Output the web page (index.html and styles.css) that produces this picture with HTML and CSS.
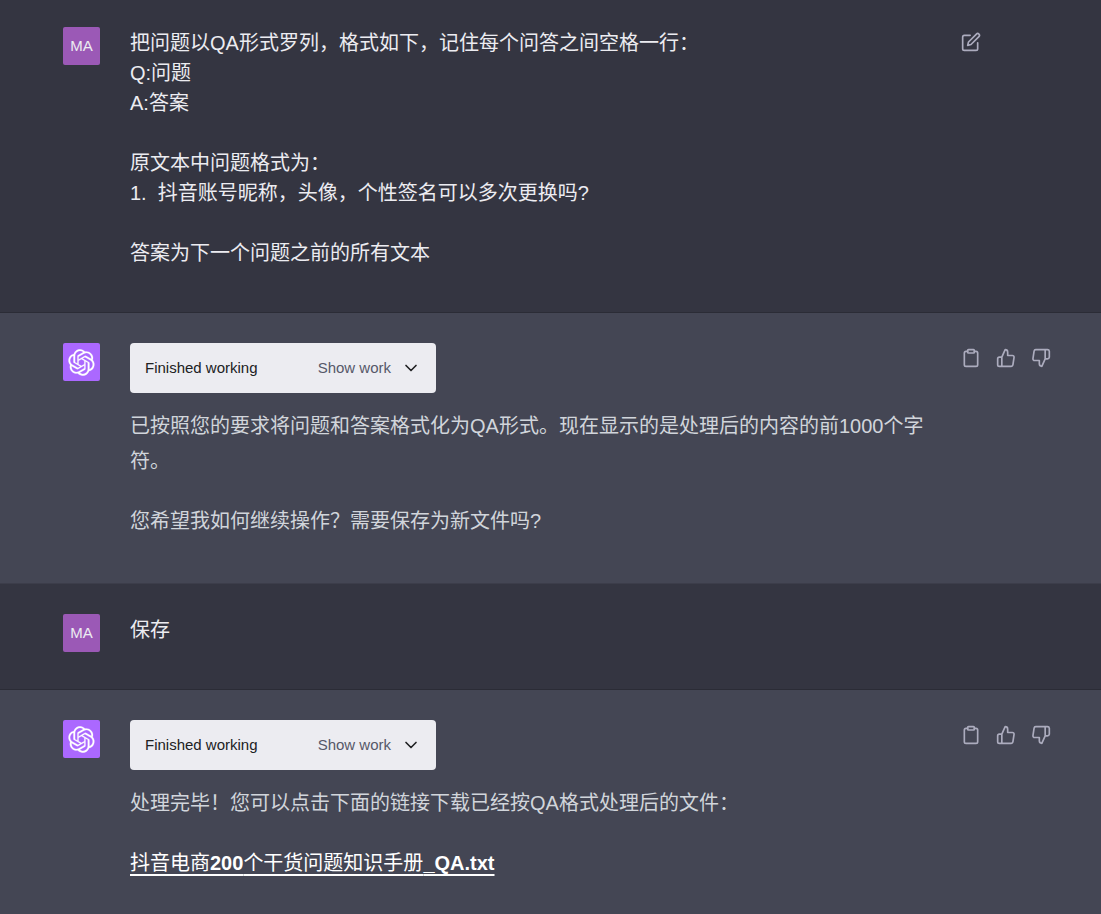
FILE: index.html
```html
<!DOCTYPE html>
<html lang="zh-CN">
<head>
<meta charset="utf-8">
<meta name="viewport" content="width=device-width, initial-scale=1">
<title>Chat</title>
<link rel="stylesheet" href="styles.css">
</head>
<body>
<svg class="sprite" aria-hidden="true">
  <symbol id="logo" viewBox="0 0 41 41"><path fill="currentColor" stroke="currentColor" stroke-width="0.3" d="M37.5324 16.8707C37.9808 15.5241 38.1363 14.0974 37.9886 12.6859C37.8409 11.2744 37.3934 9.91076 36.676 8.68622C35.6126 6.83404 33.9882 5.3676 32.0373 4.4985C30.0864 3.62941 27.9098 3.40259 25.8215 3.85078C24.8796 2.7893 23.7219 1.94125 22.4257 1.36341C21.1295 0.785575 19.7249 0.491269 18.3058 0.500197C16.1708 0.495044 14.0893 1.16803 12.3614 2.42214C10.6335 3.67624 9.34853 5.44666 8.6917 7.47815C7.30085 7.76286 5.98686 8.3414 4.8377 9.17505C3.68854 10.0087 2.73073 11.0782 2.02839 12.312C0.956464 14.1591 0.498905 16.2988 0.721698 18.4228C0.944492 20.5467 1.83612 22.5449 3.268 24.1293C2.81966 25.4759 2.66413 26.9026 2.81182 28.3141C2.95951 29.7256 3.40701 31.0892 4.12437 32.3138C5.18791 34.1659 6.8123 35.6322 8.76321 36.5013C10.7141 37.3704 12.8907 37.5973 14.9789 37.1492C15.9208 38.2107 17.0786 39.0587 18.3747 39.6366C19.6709 40.2144 21.0755 40.5087 22.4946 40.4998C24.6307 40.5054 26.7133 39.8321 28.4418 38.5772C30.1704 37.3223 31.4556 35.5506 32.1119 33.5179C33.5027 33.2332 34.8167 32.6547 35.9659 31.821C37.115 30.9874 38.0728 29.9178 38.7752 28.684C39.8458 26.8371 40.3023 24.6979 40.0789 22.5748C39.8556 20.4517 38.9639 18.4544 37.5324 16.8707ZM22.4978 37.8849C20.7443 37.8874 19.0459 37.2733 17.6994 36.1501C17.7601 36.117 17.8666 36.0586 17.936 36.0161L25.9004 31.4156C26.1003 31.3019 26.2663 31.137 26.3813 30.9378C26.4964 30.7386 26.5563 30.5124 26.5549 30.2825V19.0542L29.9213 20.998C29.9389 21.0068 29.9541 21.0198 29.9656 21.0359C29.977 21.052 29.9842 21.0707 29.9867 21.0902V30.3889C29.9842 32.375 29.1946 34.2791 27.7909 35.6841C26.3872 37.0892 24.4838 37.8806 22.4978 37.8849ZM6.39227 31.0064C5.51397 29.4888 5.19742 27.7107 5.49804 25.9832C5.55718 26.0187 5.66048 26.0818 5.73461 26.1244L13.699 30.7248C13.8975 30.8408 14.1233 30.902 14.3532 30.902C14.583 30.902 14.8088 30.8408 15.0073 30.7248L24.731 25.1103V28.9979C24.7321 29.0177 24.7283 29.0376 24.7199 29.0556C24.7115 29.0736 24.6988 29.0893 24.6829 29.1012L16.6317 33.7497C14.9096 34.7416 12.8643 35.0097 10.9447 34.4954C9.02506 33.9811 7.38785 32.7263 6.39227 31.0064ZM4.29707 13.6194C5.17156 12.0998 6.55279 10.9364 8.19885 10.3327C8.19885 10.4013 8.19491 10.5228 8.19491 10.6071V19.808C8.19351 20.0378 8.25334 20.2638 8.36823 20.4629C8.48312 20.6619 8.64893 20.8267 8.84863 20.9404L18.5723 26.5542L15.206 28.4979C15.1894 28.5089 15.1703 28.5155 15.1505 28.5173C15.1307 28.5191 15.1107 28.516 15.0924 28.5082L7.04046 23.8557C5.32135 22.8601 4.06716 21.2235 3.55289 19.3046C3.03862 17.3858 3.30624 15.3413 4.29707 13.6194ZM31.955 20.0556L22.2312 14.4411L25.5976 12.4981C25.6142 12.4872 25.6333 12.4805 25.6531 12.4787C25.6729 12.4769 25.6928 12.4801 25.7111 12.4879L33.7631 17.1364C34.9967 17.849 36.0017 18.8982 36.6606 20.1613C37.3194 21.4244 37.6047 22.849 37.4832 24.2684C37.3617 25.6878 36.8382 27.0432 35.9743 28.1759C35.1103 29.3086 33.9415 30.1717 32.6047 30.6641C32.6047 30.5947 32.6047 30.4733 32.6047 30.3889V21.188C32.6066 20.9586 32.5474 20.7328 32.4332 20.5338C32.319 20.3348 32.154 20.1698 31.955 20.0556ZM35.3055 15.0128C35.2464 14.9765 35.1431 14.9142 35.069 14.8717L27.1045 10.2712C26.906 10.1554 26.6803 10.0943 26.4504 10.0943C26.2206 10.0943 25.9948 10.1554 25.7963 10.2712L16.0726 15.8858V11.9982C16.0715 11.9783 16.0753 11.9585 16.0837 11.9405C16.0921 11.9225 16.1048 11.9068 16.1207 11.8949L24.1719 7.25025C25.4053 6.53903 26.8158 6.19376 28.2383 6.25482C29.6608 6.31589 31.0364 6.78077 32.2044 7.59508C33.3723 8.40939 34.2842 9.53945 34.8334 10.8531C35.3826 12.1667 35.5464 13.6095 35.3055 15.0128ZM14.2424 21.9419L10.8752 19.9981C10.8576 19.9893 10.8423 19.9763 10.8309 19.9602C10.8195 19.9441 10.8122 19.9254 10.8098 19.9058V10.6071C10.8107 9.18295 11.2173 7.78848 11.9819 6.58696C12.7466 5.38544 13.8377 4.42659 15.1275 3.82264C16.4173 3.21869 17.8524 2.99464 19.2649 3.1767C20.6775 3.35876 22.0089 3.93941 23.1034 4.85067C23.0427 4.88379 22.937 4.94215 22.8668 4.98473L14.9024 9.58517C14.7025 9.69878 14.5366 9.86356 14.4215 10.0626C14.3065 10.2616 14.2466 10.4877 14.2479 10.7175L14.2424 21.9419ZM16.071 17.9991L20.4018 15.4978L24.7325 17.9975V22.9985L20.4018 25.4983L16.071 22.9985V17.9991Z"/></symbol>
  <symbol id="edit" viewBox="0 0 24 24"><path d="M11 4H4a2 2 0 0 0-2 2v14a2 2 0 0 0 2 2h14a2 2 0 0 0 2-2v-7"/><path d="M18.5 2.5a2.121 2.121 0 0 1 3 3L12 15l-4 1 1-4 9.5-9.5z"/></symbol>
  <symbol id="clipboard" viewBox="0 0 24 24"><path d="M16 4h2a2 2 0 0 1 2 2v14a2 2 0 0 1-2 2H6a2 2 0 0 1-2-2V6a2 2 0 0 1 2-2h2"/><rect x="8" y="2" width="8" height="4" rx="1"/></symbol>
  <symbol id="up" viewBox="0 0 24 24"><path d="M14 9V5a3 3 0 0 0-3-3l-4 9v11h11.28a2 2 0 0 0 2-1.7l1.38-9a2 2 0 0 0-2-2.3zM7 22H4a2 2 0 0 1-2-2v-7a2 2 0 0 1 2-2h3"/></symbol>
  <symbol id="down" viewBox="0 0 24 24"><path d="M10 15v4a3 3 0 0 0 3 3l4-9V2H5.72a2 2 0 0 0-2 1.7l-1.38 9a2 2 0 0 0 2 2.3zm7-13h2.67A2.31 2.31 0 0 1 22 4v7a2.31 2.31 0 0 1-2.33 2H17"/></symbol>
  <symbol id="chevron" viewBox="0 0 24 24"><path d="M6 9l6 6 6-6"/></symbol>
</svg>
<main class="thread">
  <article class="message">
    <div class="avatar">MA</div>
    <div class="content">
      <p class="prompt">把问题以QA形式罗列，格式如下，记住每个问答之间空格一行：
Q:问题
A:答案

原文本中问题格式为：
1.  抖音账号昵称，头像，个性签名可以多次更换吗?

答案为下一个问题之前的所有文本</p>
    </div>
    <div class="actions">
      <button class="action" type="button" aria-label="编辑"><svg class="icon"><use href="#edit"/></svg></button>
    </div>
  </article>
  <article class="message reply">
    <div class="avatar bot"><svg class="logo"><use href="#logo"/></svg></div>
    <div class="content">
      <button class="work" type="button"><span class="status">Finished working</span><span class="toggle">Show work</span><svg class="chevron"><use href="#chevron"/></svg></button>
      <div class="prose">
        <p>已按照您的要求将问题和答案格式化为QA形式。现在显示的是处理后的内容的前1000个字符。</p>
        <p>您希望我如何继续操作？需要保存为新文件吗?</p>
      </div>
    </div>
    <div class="actions">
      <button class="action" type="button" aria-label="复制"><svg class="icon"><use href="#clipboard"/></svg></button>
      <button class="action" type="button" aria-label="赞"><svg class="icon"><use href="#up"/></svg></button>
      <button class="action" type="button" aria-label="踩"><svg class="icon"><use href="#down"/></svg></button>
    </div>
  </article>
  <article class="message">
    <div class="avatar">MA</div>
    <div class="content"><p class="prompt">保存</p></div>
  </article>
  <article class="message reply">
    <div class="avatar bot"><svg class="logo"><use href="#logo"/></svg></div>
    <div class="content">
      <button class="work" type="button"><span class="status">Finished working</span><span class="toggle">Show work</span><svg class="chevron"><use href="#chevron"/></svg></button>
      <div class="prose">
        <p>处理完毕！您可以点击下面的链接下载已经按QA格式处理后的文件：</p>
        <p><a class="download" href="#">抖音电商<b>200</b>个干货问题知识手册<b>_QA.txt</b></a></p>
      </div>
    </div>
    <div class="actions">
      <button class="action" type="button" aria-label="复制"><svg class="icon"><use href="#clipboard"/></svg></button>
      <button class="action" type="button" aria-label="赞"><svg class="icon"><use href="#up"/></svg></button>
      <button class="action" type="button" aria-label="踩"><svg class="icon"><use href="#down"/></svg></button>
    </div>
  </article>
</main>
</body>
</html>
```
FILE: styles.css
```css
* {
  box-sizing: border-box;
}

body {
  margin: 0;
  background: #343541;
  color: #ececf1;
  font: 20px/30px "Liberation Sans", "Noto Sans CJK SC", sans-serif;
}

p {
  margin: 0;
}

button {
  border: 0;
  padding: 0;
  background: none;
  color: inherit;
  font: inherit;
  cursor: pointer;
}

.sprite {
  display: none;
}

.thread {
  display: flex;
  flex-direction: column;
  min-height: 100vh;
}

.message {
  display: flex;
  align-items: flex-start;
  padding: 27px 48px 37px 63px;
  border-bottom: 1px solid #2b2c36;
}

.message + .message {
  padding-top: 30px;
}

.reply {
  background: #444654;
  border-bottom-color: #3c3d4a;
}

.reply:last-child {
  flex-grow: 1;
}

.avatar {
  display: flex;
  flex: none;
  align-items: center;
  justify-content: center;
  width: 37px;
  height: 38px;
  margin-right: 30px;
  border-radius: 2px;
  background: #9b59b6;
  font-size: 15px;
}

.bot {
  background: #ab68ff;
  color: #fff;
}

.logo {
  width: 27px;
  height: 27px;
}

.content {
  flex: 1;
  min-width: 0;
}

.prompt {
  padding: 1px 0 7px;
  white-space: pre-wrap;
}

.actions {
  display: flex;
  flex: none;
  gap: 15px;
  width: 92px;
  margin-left: 30px;
  padding-top: 5px;
}

.action {
  display: flex;
  color: #acacbe;
}

.icon {
  width: 20px;
  height: 20px;
  fill: none;
  stroke: currentColor;
  stroke-width: 2;
  stroke-linecap: round;
  stroke-linejoin: round;
}

.work {
  display: flex;
  align-items: center;
  width: 306px;
  height: 50px;
  padding: 0 15px;
  border-radius: 4px;
  background: #ececf1;
  color: #202123;
  font-size: 15px;
}

.status {
  flex: 1;
  text-align: left;
}

.toggle {
  color: #565869;
}

.chevron {
  width: 20px;
  height: 20px;
  margin-left: 10px;
  fill: none;
  stroke: currentColor;
  stroke-width: 2;
  stroke-linecap: round;
  stroke-linejoin: round;
}

.prose {
  display: grid;
  gap: 25px;
  padding: 16px 0 7px;
  color: #d1d5db;
  line-height: 35px;
}

.download {
  color: #fff;
  text-decoration: underline;
  text-decoration-thickness: 2px;
  text-decoration-skip-ink: none;
  text-underline-offset: 4px;
}
```
